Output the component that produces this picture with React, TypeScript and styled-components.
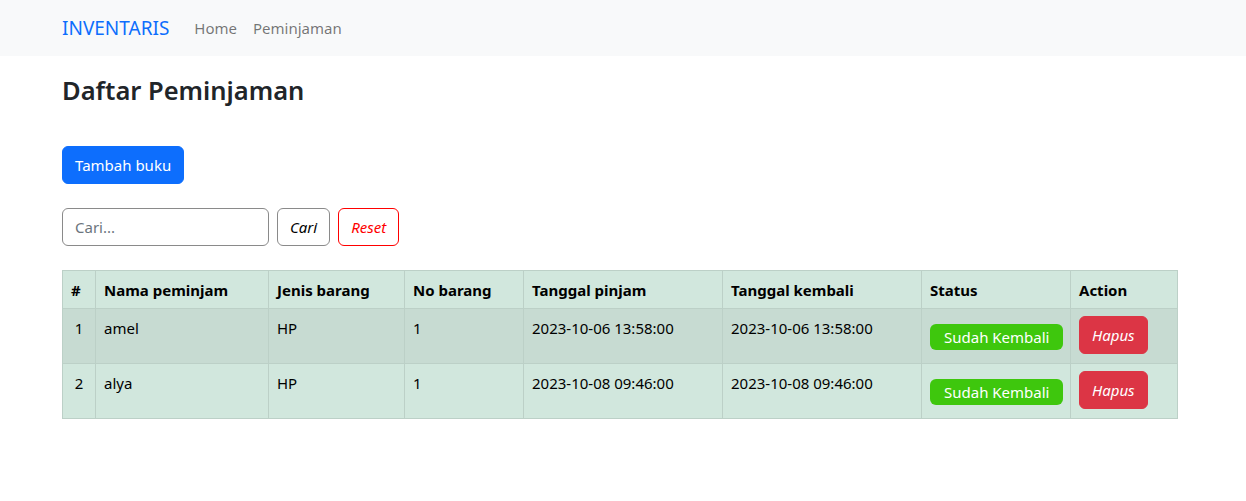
import styled, { createGlobalStyle } from "styled-components";

const GlobalStyle = createGlobalStyle`
  body {
    margin: 0;
    font-family: "Segoe UI", "Noto Sans", "Liberation Sans", sans-serif;
    font-size: 15px;
    line-height: 24px;
    color: #212529;
    background: #fff;
  }
  * { box-sizing: border-box; }
`;

const Navbar = styled.nav`
  height: 56px;
  background: #f8f9fa;
  display: flex;
  align-items: center;
  padding-left: 62px;
`;

const Brand = styled.a`
  font-size: 19px;
  color: #0d6efd;
  margin-right: 17px;
  text-decoration: none;
`;

const NavLink = styled.a`
  color: rgba(0, 0, 0, 0.55);
  padding: 0 8px;
  text-decoration: none;
  font-size: 15px;
`;

const Container = styled.main`
  width: 1116px;
  margin-left: 62px;
`;

const Title = styled.h2`
  margin: 17px 0 39px;
  font-size: 25.5px;
  font-weight: 600;
  line-height: 34px;
  color: #212529;
`;

const Button = styled.button<{ $variant: "primary" | "outline" | "reset" | "danger" }>`
  font-family: inherit;
  font-size: 15px;
  line-height: 24px;
  height: 38px;
  padding: 6px 12px;
  border-radius: 6px;
  cursor: pointer;
  white-space: nowrap;
  border: 1px solid
    ${(p) =>
      p.$variant === "primary"
        ? "#0d6efd"
        : p.$variant === "danger"
        ? "#dc3545"
        : p.$variant === "reset"
        ? "#ff0000"
        : "#8a8a8a"};
  background: ${(p) =>
    p.$variant === "primary" ? "#0d6efd" : p.$variant === "danger" ? "#dc3545" : "#fff"};
  color: ${(p) =>
    p.$variant === "primary" || p.$variant === "danger"
      ? "#fff"
      : p.$variant === "reset"
      ? "#ff0000"
      : "#000"};
  font-style: ${(p) => (p.$variant === "primary" ? "normal" : "italic")};
`;

const SearchForm = styled.form`
  display: flex;
  gap: 8px;
  margin: 24px 0;
`;

const SearchInput = styled.input`
  width: 207px;
  height: 38px;
  padding: 6px 12px;
  font-family: inherit;
  font-size: 15px;
  border: 1px solid #8a8a8a;
  border-radius: 6px;
  color: #212529;
  &::placeholder {
    color: #6c757d;
  }
`;

const Table = styled.table`
  width: 1115px;
  table-layout: fixed;
  border-collapse: collapse;
  background: #d1e7dd;
  color: #000;
`;

const Row = styled.tr<{ $striped?: boolean }>`
  background: ${(p) => (p.$striped ? "#c7dbd2" : "transparent")};
`;

const Th = styled.th`
  text-align: left;
  font-weight: 700;
  padding: 7px 8px 6px;
  border: 1px solid #bcd0c7;
  vertical-align: top;
  white-space: nowrap;
`;

const Td = styled.td<{ $center?: boolean }>`
  padding: 7px 8px;
  border: 1px solid #bcd0c7;
  vertical-align: top;
  height: 55px;
  text-align: ${(p) => (p.$center ? "center" : "left")};
`;

const Badge = styled.span`
  display: inline-block;
  margin-top: 8px;
  height: 26px;
  line-height: 26px;
  padding: 0 14px;
  border-radius: 6px;
  background: #3ec70d;
  color: #fff;
  font-size: 15px;
  white-space: nowrap;
`;

const widths = [33, 173, 136, 119, 199, 199, 149, 107];
const headers = [
  "#",
  "Nama peminjam",
  "Jenis barang",
  "No barang",
  "Tanggal pinjam",
  "Tanggal kembali",
  "Status",
  "Action",
];

const rows = [
  { no: 1, nama: "amel", jenis: "HP", barang: "1", pinjam: "2023-10-06 13:58:00", kembali: "2023-10-06 13:58:00" },
  { no: 2, nama: "alya", jenis: "HP", barang: "1", pinjam: "2023-10-08 09:46:00", kembali: "2023-10-08 09:46:00" },
];

export default function App() {
  return (
    <>
      <GlobalStyle />
      <Navbar>
        <Brand href="#">INVENTARIS</Brand>
        <NavLink href="#">Home</NavLink>
        <NavLink href="#">Peminjaman</NavLink>
      </Navbar>
      <Container>
        <Title>Daftar Peminjaman</Title>
        <Button $variant="primary">Tambah buku</Button>
        <SearchForm onSubmit={(e) => e.preventDefault()}>
          <SearchInput placeholder="Cari..." />
          <Button $variant="outline">Cari</Button>
          <Button $variant="reset" type="button">Reset</Button>
        </SearchForm>
        <Table>
          <colgroup>
            {widths.map((w, i) => (
              <col key={i} style={{ width: w }} />
            ))}
          </colgroup>
          <thead>
            <tr>
              {headers.map((h) => (
                <Th key={h}>{h}</Th>
              ))}
            </tr>
          </thead>
          <tbody>
            {rows.map((r, i) => (
              <Row key={r.no} $striped={i % 2 === 0}>
                <Td $center>{r.no}</Td>
                <Td>{r.nama}</Td>
                <Td>{r.jenis}</Td>
                <Td>{r.barang}</Td>
                <Td>{r.pinjam}</Td>
                <Td>{r.kembali}</Td>
                <Td>
                  <Badge>Sudah Kembali</Badge>
                </Td>
                <Td>
                  <Button $variant="danger">Hapus</Button>
                </Td>
              </Row>
            ))}
          </tbody>
        </Table>
      </Container>
    </>
  );
}
